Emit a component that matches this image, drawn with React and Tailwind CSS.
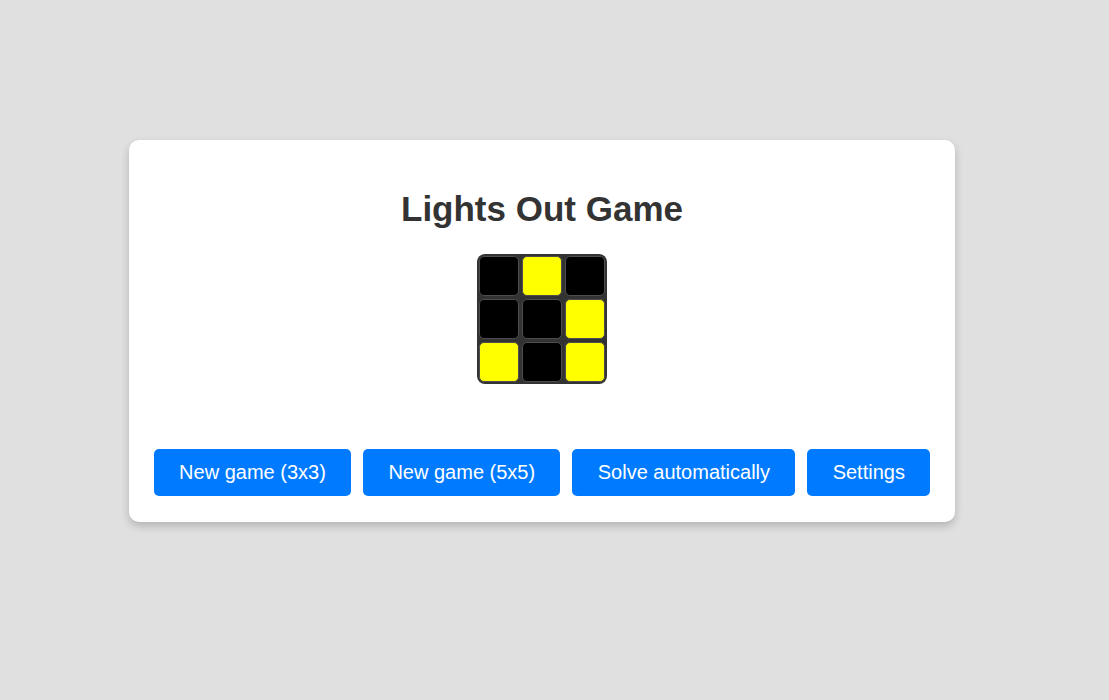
import React from "react";

const cells = [0, 1, 0, 0, 0, 1, 1, 0, 1];

export default function App() {
  return (
    <div
      className="min-h-[700px] w-full bg-[#e0e0e0] pt-[140px] flex justify-center pr-[25px]"
      style={{ fontFamily: '"Liberation Sans", Arial, sans-serif' }}
    >
      <div className="self-start bg-white rounded-[10px] shadow-[0_4px_8px_rgba(0,0,0,0.2)] px-[25px] pt-[49px] pb-[26px] flex flex-col items-center">
        <h1 className="text-[35px] leading-[40px] font-bold text-[#333] m-0">
          Lights Out Game
        </h1>
        <div className="mt-[25px] grid grid-cols-3 gap-[3px] p-[2px] bg-[#333] rounded-[8px]">
          {cells.map((on, i) => (
            <div
              key={i}
              className={
                "w-[40px] h-[40px] rounded-[5px] border border-[#4d4d4d] " +
                (on ? "bg-[#ffff00]" : "bg-black")
              }
            />
          ))}
        </div>
        <div className="mt-[65px] flex gap-[12px]">
          {["New game (3x3)", "New game (5x5)", "Solve automatically", "Settings"].map(
            (t) => (
              <button
                key={t}
                className="h-[47px] px-[25.3px] bg-[#007bff] text-white text-[20px] leading-[23px] rounded-[5px]"
              >
                {t}
              </button>
            )
          )}
        </div>
      </div>
    </div>
  );
}
